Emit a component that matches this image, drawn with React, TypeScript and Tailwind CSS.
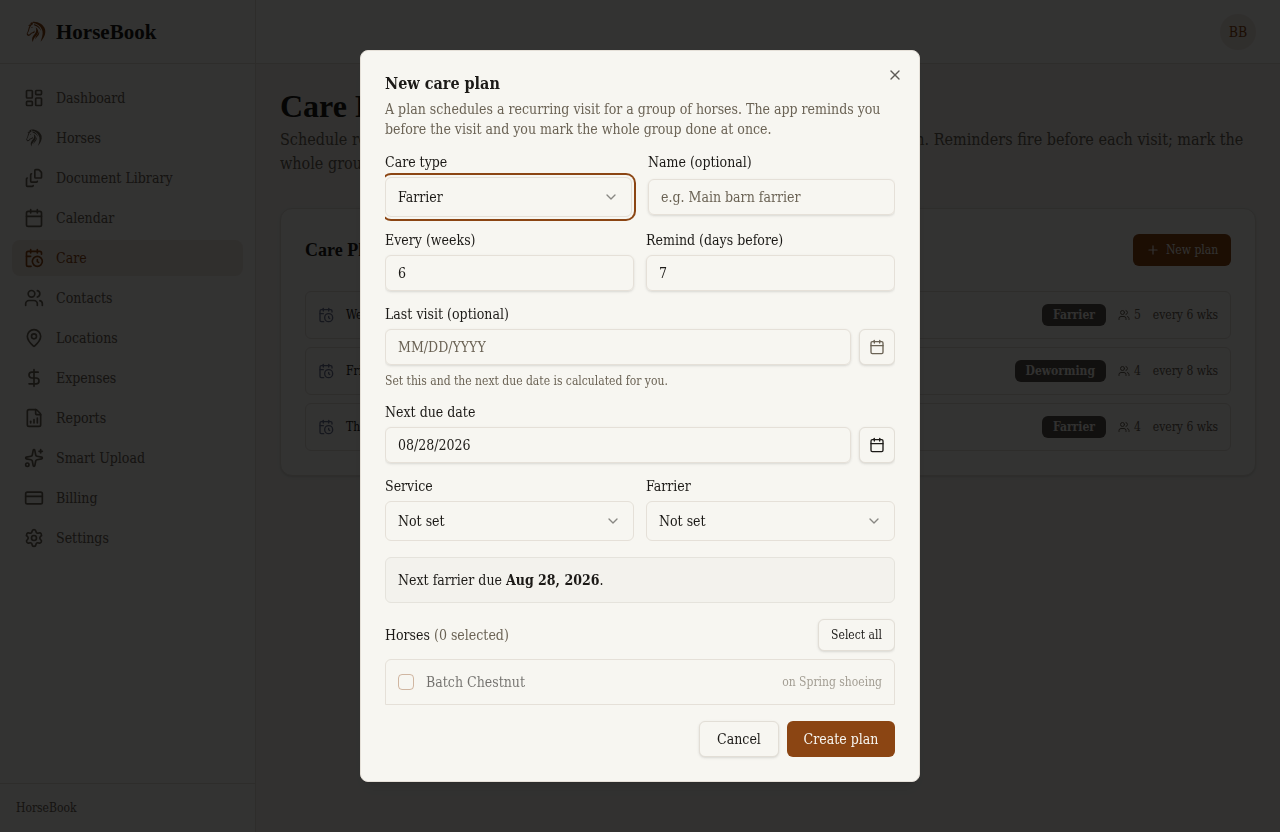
import { useState } from 'react';
import type { ReactNode, SelectHTMLAttributes } from 'react';
import {
  Calendar,
  CalendarClock,
  ChevronDown,
  CreditCard,
  DollarSign,
  FileChartColumnIncreasing,
  FileStack,
  LayoutDashboard,
  MapPin,
  Plus,
  Settings,
  Sparkles,
  Users,
  X,
} from 'lucide-react';
import clsx from 'clsx';

function HorseIcon({ className }: { className?: string }) {
  return (
    <svg viewBox="-8 -5 74 74" className={className} fill="currentColor" aria-hidden="true">
      <path d="M18 1C34-1 52 8 57 24c3 14-4 27-14 38 4-11 8-22 6-32C46 17 36 7 22 5z" />
      <path d="M23 7c11 3 20 11 22 22-5-9-12-14-21-17z" />
      <path d="M12 4l6-3 2 7c-5 2-8 6-10 11L6 31l-3 5 2 4 5-1 3-4 7-3 5-5-1 7-8 3-6 6-6 1-4-6 4-9 3-12 5-8z" />
      <path d="M5 12l7-5-3 7z" />
      <path d="M13 19l6-3-2 4z" />
      <path d="M28 17c8 5 10 14 5 22-5 7-12 12-14 24-5-12 1-19 6-25 5-7 6-13 3-21z" />
      <path d="M38 27c3 8 0 14-5 19-3 3-5 6-6 9 0-7 3-11 6-15 3-4 5-8 5-13z" />
    </svg>
  );
}

const navItems = [
  { label: 'Dashboard', icon: LayoutDashboard },
  { label: 'Horses', icon: HorseIcon },
  { label: 'Document Library', icon: FileStack },
  { label: 'Calendar', icon: Calendar },
  { label: 'Care', icon: CalendarClock },
  { label: 'Contacts', icon: Users },
  { label: 'Locations', icon: MapPin },
  { label: 'Expenses', icon: DollarSign },
  { label: 'Reports', icon: FileChartColumnIncreasing },
  { label: 'Smart Upload', icon: Sparkles },
  { label: 'Billing', icon: CreditCard },
  { label: 'Settings', icon: Settings },
];

const plans = [
  { day: 'Wed', type: 'Farrier', horses: 5, weeks: 6 },
  { day: 'Fri', type: 'Deworming', horses: 4, weeks: 8 },
  { day: 'Thu', type: 'Farrier', horses: 4, weeks: 6 },
];

const inputClass =
  'h-9 w-full min-w-0 rounded-md border border-[#e5e0d8] bg-transparent px-3 text-sm shadow-sm outline-none placeholder:text-[#6b6355]';
const outlineButton =
  'flex items-center justify-center rounded-md border border-[#e2ded6] bg-[#f7f6f1] shadow-sm';

function Sidebar() {
  return (
    <aside className="flex w-64 shrink-0 flex-col border-r border-[#e5e0d8] bg-[#fdfcf9]">
      <div className="flex h-16 items-center gap-2 border-b border-[#e5e0d8] px-6">
        <HorseIcon className="h-6 w-6 text-[#8b4513]" />
        <span className="font-['Liberation_Serif',serif] text-[21px] font-bold leading-7">HorseBook</span>
      </div>
      <nav className="flex flex-1 flex-col gap-1 px-3 py-4">
        {navItems.map(({ label, icon: Icon }) => (
          <a
            key={label}
            href="#"
            className={clsx(
              'flex h-9 items-center gap-3 rounded-lg px-3 text-sm',
              label === 'Care' ? 'bg-[#8b4513]/10 text-[#8b4513]' : 'text-[#6b6355]'
            )}
          >
            <Icon className="h-5 w-5" />
            {label}
          </a>
        ))}
      </nav>
      <div className="border-t border-[#e5e0d8] p-4 text-xs text-[#6b6355]">HorseBook</div>
    </aside>
  );
}

function PlanList() {
  return (
    <section className="mt-8 rounded-xl border border-[#e5e0d8] bg-[#fdfcf9] p-6 shadow-sm">
      <div className="flex h-[34px] items-center justify-between">
        <h2 className="font-['Liberation_Serif',serif] text-lg font-bold">Care Plans</h2>
        <button className="flex h-8 w-[98px] items-center justify-center gap-1.5 rounded-md bg-[#8b4513] text-xs text-[#f7f6f1]">
          <Plus className="h-3.5 w-3.5" />
          New plan
        </button>
      </div>
      <ul className="mt-6 flex flex-col gap-2">
        {plans.map((plan) => (
          <li
            key={plan.day}
            className="flex h-12 items-center gap-3 rounded-md border border-[#e5e0d8] px-3 text-xs text-[#6b6355]"
          >
            <CalendarClock className="h-4 w-4 text-[#6b7290]" />
            <span className="flex-1 text-[#1c1a17]">{plan.day}</span>
            <span className="rounded-md bg-[#55504a] px-[11px] py-[3px] font-bold text-[#f7f6f1]">{plan.type}</span>
            <span className="flex items-center gap-1">
              <Users className="h-3 w-3" />
              {plan.horses}
            </span>
            <span>every {plan.weeks} wks</span>
          </li>
        ))}
      </ul>
    </section>
  );
}

function Field({ id, label, children }: { id: string; label: string; children: ReactNode }) {
  return (
    <div className="flex min-w-0 flex-col gap-2">
      <label htmlFor={id} className="text-sm leading-[14px]">
        {label}
      </label>
      {children}
    </div>
  );
}

function SelectBox({ className, children, ...props }: SelectHTMLAttributes<HTMLSelectElement>) {
  return (
    <div className="relative">
      <select
        {...props}
        className={clsx(
          'block h-10 w-full appearance-none rounded-md border border-[#e5e0d8] bg-[#f7f6f1] px-3 text-sm outline-none',
          className
        )}
      >
        {children}
      </select>
      <ChevronDown className="pointer-events-none absolute right-[13px] top-3 h-4 w-4 opacity-50" />
    </div>
  );
}

function NewPlanModal() {
  const [selected, setSelected] = useState(false);

  return (
    <div className="fixed inset-0 z-50 flex items-center justify-center bg-black/80 p-4">
      <div
        role="dialog"
        aria-labelledby="plan-title"
        className="relative flex w-full max-w-[560px] flex-col gap-4 rounded-lg border border-[#e5e0d8] bg-[#f7f6f1] p-6 shadow-lg"
      >
        <button className="absolute right-4 top-4 opacity-70" aria-label="Close">
          <X className="h-4 w-4" />
        </button>

        <div className="flex flex-col gap-1.5">
          <h2 id="plan-title" className="text-base font-bold leading-[18px]">
            New care plan
          </h2>
          <p className="text-sm leading-5 text-[#6b6355]">
            A plan schedules a recurring visit for a group of horses. The app reminds you before the visit and you
            mark the whole group done at once.
          </p>
        </div>

        <form className="flex flex-col gap-4 overflow-hidden">
          <div className="grid grid-cols-2 gap-4">
            <Field id="care-type" label="Care type">
              <SelectBox
                id="care-type"
                className="ring-2 ring-[#8b4513] ring-offset-2 ring-offset-[#f7f6f1]"
              >
                <option>Farrier</option>
              </SelectBox>
            </Field>
            <Field id="name" label="Name (optional)">
              <div className="flex h-10 items-center">
                <input id="name" className={inputClass} placeholder="e.g. Main barn farrier" />
              </div>
            </Field>
          </div>

          <div className="grid grid-cols-2 gap-3">
            <Field id="every" label="Every (weeks)">
              <input id="every" className={inputClass} defaultValue="6" />
            </Field>
            <Field id="remind" label="Remind (days before)">
              <input id="remind" className={inputClass} defaultValue="7" />
            </Field>
          </div>

          <Field id="last-visit" label="Last visit (optional)">
            <div className="flex gap-2">
              <input id="last-visit" className={inputClass} placeholder="MM/DD/YYYY" />
              <button
                type="button"
                aria-label="Pick last visit"
                className={clsx(outlineButton, 'h-9 w-9 shrink-0 text-[#6b6355]')}
              >
                <Calendar className="h-4 w-4" />
              </button>
            </div>
            <p className="text-xs text-[#6b6355]">Set this and the next due date is calculated for you.</p>
          </Field>

          <Field id="next-due" label="Next due date">
            <div className="flex gap-2">
              <input id="next-due" className={inputClass} defaultValue="08/28/2026" />
              <button type="button" aria-label="Pick next due date" className={clsx(outlineButton, 'h-9 w-9 shrink-0')}>
                <Calendar className="h-4 w-4" />
              </button>
            </div>
          </Field>

          <div className="grid grid-cols-2 gap-3">
            <Field id="service" label="Service">
              <SelectBox id="service">
                <option>Not set</option>
              </SelectBox>
            </Field>
            <Field id="farrier" label="Farrier">
              <SelectBox id="farrier">
                <option>Not set</option>
              </SelectBox>
            </Field>
          </div>

          <div className="rounded-md border border-[#e5e3dc] bg-[#f3f2ed] p-3 text-sm leading-5">
            Next farrier due <strong className="font-bold">Aug 28, 2026</strong>.
          </div>

          <div className="flex flex-col gap-2">
            <div className="flex items-center justify-between text-sm">
              <span>
                Horses <span className="text-[#6b6355]">({selected ? 1 : 0} selected)</span>
              </span>
              <button
                type="button"
                onClick={() => setSelected(true)}
                className={clsx(outlineButton, 'h-8 w-[77px] text-xs')}
              >
                Select all
              </button>
            </div>
            <div className="rounded-t-md border border-[#e5e0d8]">
              <label className="flex h-11 items-center gap-3 px-3 text-sm opacity-60">
                <input
                  type="checkbox"
                  checked={selected}
                  onChange={() => setSelected(!selected)}
                  className="h-4 w-4 appearance-none rounded border border-[#8b4513]/60 checked:bg-[#8b4513]"
                />
                <span className="flex-1">Batch Chestnut</span>
                <span className="text-xs text-[#6b6355]">on Spring shoeing</span>
              </label>
            </div>
          </div>
        </form>

        <div className="flex justify-end gap-2 text-sm">
          <button className={clsx(outlineButton, 'h-9 w-20')}>Cancel</button>
          <button className="h-9 w-[108px] rounded-md bg-[#8b4513] text-[#f7f6f1]">Create plan</button>
        </div>
      </div>
    </div>
  );
}

export default function App() {
  return (
    <div className="flex min-h-screen bg-[#f7f6f1] font-['DejaVu_Serif_Condensed','DejaVu_Serif',serif] text-[#1c1a17]">
      <Sidebar />
      <div className="flex min-w-0 flex-1 flex-col">
        <header className="flex h-16 items-center justify-end border-b border-[#e5e0d8] bg-[#fdfcf9] px-6">
          <button className="h-9 w-9 rounded-full bg-[#8b4513]/10 text-sm text-[#8b4513]">BB</button>
        </header>
        <main className="p-6">
          <h1 className="font-['Liberation_Serif',serif] text-[32px] font-bold leading-9">Care Plans</h1>
          <p className="mt-1 text-base text-[#6b6355]">
            Schedule recurring farrier, vet and deworming visits for one group of horses or for each. Reminders fire
            before each visit; mark the whole group done at once.
          </p>
          <PlanList />
        </main>
      </div>
      <NewPlanModal />
    </div>
  );
}
